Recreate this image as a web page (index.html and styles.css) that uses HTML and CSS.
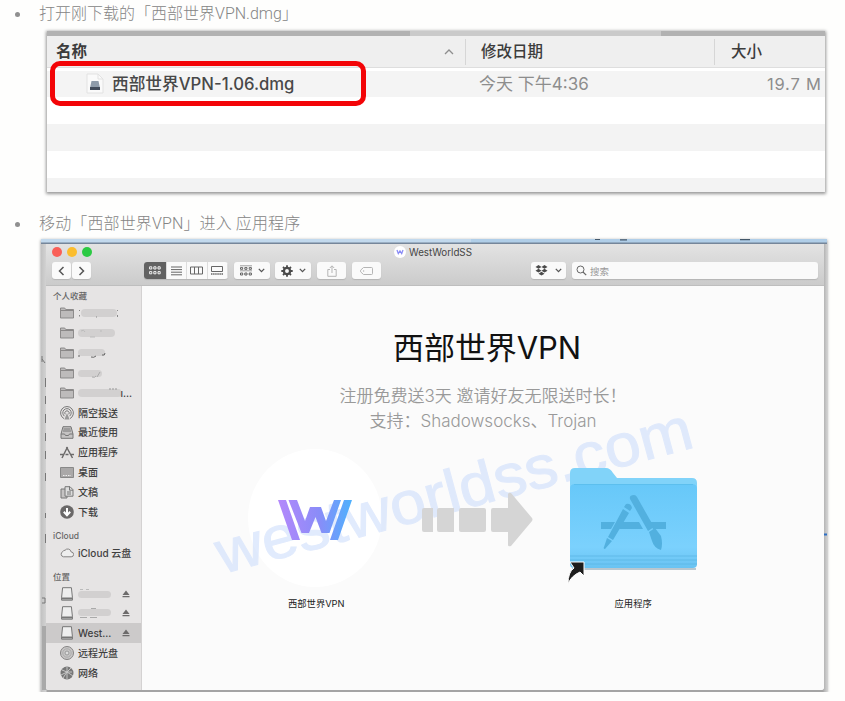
FILE: index.html
```html
<!DOCTYPE html>
<html lang="zh-CN">
<head>
<meta charset="utf-8">
<title>西部世界VPN</title>
<link rel="stylesheet" href="styles.css">
</head>
<body>
<svg class="defs" width="0" height="0">
  <defs>
    <linearGradient id="violet" x1="0" x2="1"><stop offset="0" stop-color="#b488fb"/><stop offset=".55" stop-color="#8a8cf8"/><stop offset="1" stop-color="#4eb1fd"/></linearGradient>
    <linearGradient id="sky" x1="0" y1="0" x2="0" y2="1"><stop offset="0" stop-color="#67c8f9"/><stop offset=".75" stop-color="#7bd1fd"/><stop offset="1" stop-color="#69c3f2"/></linearGradient>
    <symbol id="folder" viewBox="0 0 14 12"><path d="M.5 11V1h4.2l1 1.5h7.8V11z" fill="#bdbbbb" stroke="#858383" stroke-width=".9"/><path d="M.5 3.5h13" stroke="#8a8888"/></symbol>
    <symbol id="drive" viewBox="0 0 14 14"><path d="M2.600.7h8.800l1 9.500v3H1.600v-3z" fill="#eee" stroke="#777" stroke-width="1"/><path d="M1.600 11.500h10.800" stroke="#777" stroke-width="1.800"/></symbol>
    <symbol id="eject" viewBox="0 0 8 8"><path d="M4 .5 7.500 5h-7zM.5 6h7v1.300h-7z" fill="#6d6b6b"/></symbol>
    <symbol id="down" viewBox="0 0 7 5"><path d="m.8.9 2.700 2.700L6.200.9" fill="none" stroke="#555" stroke-width="1.300"/></symbol>
  </defs>
</svg>
<ul class="steps">
  <li>
    <p class="step-text">打开刚下载的「西部世界VPN.dmg」</p>
    <div class="list-shot">
      <div class="strip"><span></span></div>
      <div class="cols head">
        <b class="c-name">名称</b><svg class="sort" width="10" height="6" viewBox="0 0 10 6"><path d="m1 5 4-4 4 4" fill="none" stroke="#8e8e8e" stroke-width="1.3"/></svg>
        <b class="c-date">修改日期</b><b class="c-size">大小</b>
      </div>
      <div class="cols file">
        <svg width="20" height="22" viewBox="0 0 20 22"><path d="M2 1h11l5 5v14H2z" fill="#fafafa" stroke="#e2e2e2"/><path d="M13 1v5h5" fill="none" stroke="#e2e2e2"/><path d="m6.500 8h7l1.500 7v2H5v-2z" fill="#8e9ba9"/><path d="M5 14h10v3H5z" fill="#414b59"/></svg>
        <span class="f-name">西部世界VPN-1.06.dmg</span>
        <span class="f-date">今天 下午4:36</span><span class="f-size">19.7 M</span>
      </div>
      <div class="row"></div><div class="row odd"></div><div class="row"></div><div class="row odd last"></div>
      <div class="mark"></div>
    </div>
  </li>
  <li>
    <p class="step-text">移动「西部世界VPN」进入 应用程序</p>
    <div class="finder-shot">
      <svg class="blue" width="786" height="5" viewBox="0 0 786 5"><path d="M0 0h786v5H0z" fill="#c2d9ed"/><path d="M430 0h356v4H430z" fill="#b0cee8"/><path d="M0 4.200h786" stroke="#75869a" stroke-width="1.400"/><path d="M554 .5h5m20 .3h7m113-.2h10" stroke="#43576a" stroke-width="1.200"/></svg>
      <svg class="edge" width="786" height="449" viewBox="41 244 786 449"><path d="M45.500 378v9m0 9v8m0 10v9m0 10v8m0 10v8m0 14v8m0 32v5m0 16v9" stroke="#777"/><path d="M42 356v6m0-3 3 4M42 598h3v5h-3" fill="none" stroke="#777"/><path d="M42 626h4v64h-4z" fill="#a9a9a9"/><path d="M824 534.500h3" stroke="#2d6fc4" stroke-width="2"/></svg>
      <div class="behind">
        <div class="finder">
          <div class="toolbar">
            <div class="titlebar">
              <i class="dot red"></i><i class="dot yellow"></i><i class="dot green"></i>
              <span class="title"><svg width="12" height="12" viewBox="0 0 12 12"><circle cx="6" cy="6" r="6" fill="#fff"/><path d="m3 4 1.300 3.600L6 5l1.700 2.600L9 4" fill="none" stroke="#8b8df6" stroke-width="1.300"/></svg>WestWorldSS</span>
            </div>
            <div class="tools">
              <span class="btn nav"><svg width="7" height="10" viewBox="0 0 7 10"><path d="M5.500 1 1.500 5l4 4" fill="none" stroke="#555" stroke-width="1.500"/></svg></span>
              <span class="btn nav next"><svg width="7" height="10" viewBox="0 0 7 10"><path d="m1.500 1 4 4-4 4" fill="none" stroke="#555" stroke-width="1.500"/></svg></span>
              <span class="btn views">
                <span class="on"><svg width="12" height="9" viewBox="0 0 12 9"><path d="M.6.8h2.200v2.200H.6zM4.800.8H7V3H4.800zM9 .8h2.200V3H9zM.6 5.600h2.200v2.200H.6zM4.800 5.600H7v2.200H4.800zM9 5.600h2.200v2.200H9z" fill="none" stroke="#fff" stroke-width=".9"/></svg></span>
                <span><svg width="11" height="10" viewBox="0 0 11 10"><path d="M0 1h11M0 3.600h11M0 6.200h11M0 8.800h11" stroke="#666" stroke-width="1"/></svg></span>
                <span><svg width="13" height="9" viewBox="0 0 13 9"><path d="M.5 1h12v7H.5zM4.500 1v7M8.500 1v7" fill="none" stroke="#666"/></svg></span>
                <span><svg width="12" height="9" viewBox="0 0 12 9"><path d="M.5 5.500v-5h11v5z" fill="none" stroke="#666"/><path d="M0 8h12" stroke="#666" stroke-width="1.500" stroke-dasharray="1.500 .6"/></svg></span>
              </span>
              <span class="btn arrange"><svg width="12" height="11" viewBox="0 0 12 11"><path d="M0 .8h12M0 5.800h12" stroke="#888" stroke-width=".8"/><path d="M.5 2.600h2.200v1.700H.5zM4.800 2.600H7v1.700H4.800zM9.200 2.600h2.200v1.700H9.200zM.5 8h2.200v2H.5zM4.800 8H7v2H4.800zM9.200 8h2.200v2H9.200z" fill="none" stroke="#555" stroke-width=".9"/></svg><svg width="7" height="5"><use href="#down"/></svg></span>
              <span class="btn gear"><svg width="12" height="12" viewBox="0 0 12 12"><circle cx="6" cy="6" r="3.100" fill="none" stroke="#4a4a4a" stroke-width="2.300"/><path d="M6 .3v2M6 9.700v2M.3 6h2M9.700 6h2M2 2l1.400 1.400M8.600 8.600 10 10M2 10l1.400-1.400M8.600 3.400 10 2" stroke="#4a4a4a" stroke-width="1.800"/></svg><svg width="7" height="5"><use href="#down"/></svg></span>
              <span class="btn share"><svg width="10" height="12" viewBox="0 0 10 12"><path d="M3 4.500H.8v6.800h8.400V4.500H7M5 8V1M2.800 3 5 .8 7.200 3" fill="none" stroke="#b5b5b5"/></svg></span>
              <span class="btn tag"><svg width="13" height="8" viewBox="0 0 13 8"><path d="M3.500.5h8q1 0 1 1v5q0 1-1 1h-8L.6 4.800v-1.600z" fill="none" stroke="#b5b5b5"/><circle cx="3.600" cy="4" r=".7" fill="#b5b5b5"/></svg></span>
              <span class="btn box"><svg width="13" height="11" viewBox="0 0 13 11"><path d="M3.500 0 6.500 1.900 3.500 3.800.5 1.900zM9.500 0l3 1.900-3 1.900-3-1.900zM3.500 3.800l3 1.900-3 1.900-3-1.900zM9.500 3.800l3 1.900-3 1.900-3-1.900zM6.500 6.800l3 1.900-3 1.900-3-1.900z" fill="#4a4a4a"/></svg><svg width="7" height="5"><use href="#down"/></svg></span>
              <span class="btn search"><svg width="11" height="11" viewBox="0 0 11 11"><circle cx="4.500" cy="4.500" r="3.500" fill="none" stroke="#666"/><path d="m7 7 3.200 3.200" stroke="#666" stroke-width="1.200"/></svg>搜索</span>
            </div>
          </div>
          <div class="body">
            <div class="side">
              <h4>个人收藏</h4>
              <div class="item"><svg width="14" height="12"><use href="#folder"/></svg><svg width="42" height="12" viewBox="0 0 42 12"><rect x="3" y="2" width="36" height="8" rx="4" fill="#d2d0d0"/><path d="M1.500 3v1m0 4v1.500m17 0v1m21-7.500v1m0 4v2" stroke="#888"/></svg></div>
              <div class="item"><svg width="14" height="12"><use href="#folder"/></svg><svg width="42" height="12" viewBox="0 0 42 12"><rect y="2" width="37" height="8" rx="4" fill="#d2d0d0"/><path d="M3 4q3-2 4 1m5 5h5m6-7v2" stroke="#bbb" fill="none"/></svg></div>
              <div class="item"><svg width="14" height="12"><use href="#folder"/></svg><svg width="42" height="12" viewBox="0 0 42 12"><rect y="2" width="27" height="7" rx="3.500" fill="#d2d0d0"/><path d="M1 8v2m12 0q3 1 5-1m6-1q3 1 3-2" stroke="#666" fill="none"/></svg></div>
              <div class="item"><svg width="14" height="12"><use href="#folder"/></svg><svg width="42" height="12" viewBox="0 0 42 12"><rect y="3" width="24" height="7" rx="3.500" fill="#d2d0d0"/><path d="M14 10q3 1 4-1m4-4-3 5" stroke="#aaa" fill="none"/></svg></div>
              <div class="item"><svg width="14" height="12"><use href="#folder"/></svg><svg width="43" height="12" viewBox="0 0 43 12"><rect y="2" width="44" height="8" rx="4" fill="#d2d0d0"/><path d="M31 2h9" stroke="#999" stroke-dasharray="2 1"/></svg><span class="dots">ı...</span></div>
              <div class="item"><svg width="14" height="14" viewBox="0 0 14 14"><g fill="none" stroke="#777"><path d="M4 12.600a6.400 6.400 0 1 1 6 0M4.500 10.200a4.200 4.200 0 1 1 5 0M5.200 8.300a2.200 2.200 0 1 1 3.600 0"/></g><path d="m7 7 2.600 6.500H4.400z" fill="#999"/></svg>隔空投送</div>
              <div class="item"><svg width="14" height="13" viewBox="0 0 14 13"><path d="M3 .7h8l2 7.300v4.300H1V8z" fill="#c5c3c3" stroke="#777"/><path d="M3.500 3h7M3 5h8M1 8h3.500l1 1.500h3L9.500 8H13" fill="none" stroke="#777"/></svg>最近使用</div>
              <div class="item"><svg width="14" height="13" viewBox="0 0 14 13"><path d="M6.500 1 12.500 12M7.500 1 2 12M0 8.500h4m1.500 0h3m2.500 0h3" fill="none" stroke="#6d6b6b" stroke-width="1.500"/></svg>应用程序</div>
              <div class="item"><svg width="14" height="11" viewBox="0 0 14 11"><path d="M.5.5h13v10H.5z" fill="#aaa8a8" stroke="#888"/><path d="M3 8.500h8" stroke="#eee" stroke-dasharray="1.500 1"/></svg>桌面</div>
              <div class="item"><svg width="14" height="13" viewBox="0 0 14 13"><path d="M1 3h6v9H1z" fill="#c5c3c3" stroke="#777"/><path d="M5 .7h5l3 3v6.500H5z" fill="#ddd" stroke="#777"/><path d="M9.500.7v3.500H13M7 6h4M7 8h4" fill="none" stroke="#777"/></svg>文稿</div>
              <div class="item"><svg width="14" height="14" viewBox="0 0 14 14"><circle cx="7" cy="7" r="6.800" fill="#6a6868"/><path d="M7 3v6M3.800 6.800 7 10.200l3.200-3.400" fill="none" stroke="#fff" stroke-width="2"/></svg>下载</div>
              <h4 class="cloud">iCloud</h4>
              <div class="item"><svg width="14" height="11" viewBox="0 0 14 11"><path d="M3.500 9.800a2.700 2.700 0 0 1-.6-5.200Q3.500 3 5 3.300A3.500 3.500 0 0 1 11.200 5a2.400 2.400 0 0 1 0 4.800z" fill="#eee" stroke="#858383"/></svg>iCloud 云盘</div>
              <h4 class="place">位置</h4>
              <div class="item"><svg width="14" height="14"><use href="#drive"/></svg><svg width="36" height="12" viewBox="0 0 36 12"><rect x="0" y="3" width="33" height="7" rx="3.500" fill="#d2d0d0"/><path d="M2 1.500h3m3 0h3" stroke="#bbb"/></svg><svg class="eject" width="8" height="8"><use href="#eject"/></svg></div>
              <div class="item"><svg width="14" height="14"><use href="#drive"/></svg><svg width="36" height="12" viewBox="0 0 36 12"><rect x="0" y="2" width="33" height="7" rx="3.500" fill="#d2d0d0"/><path d="M2 10.500h7m3 0h7M13 1.500h5" stroke="#aaa"/></svg><svg class="eject" width="8" height="8"><use href="#eject"/></svg></div>
              <div class="item sel"><svg width="14" height="14"><use href="#drive"/></svg>West...<svg class="eject" width="8" height="8"><use href="#eject"/></svg></div>
              <div class="item"><svg width="14" height="14" viewBox="0 0 14 14"><circle cx="7" cy="7" r="6.500" fill="#c8c6c6" stroke="#858383"/><circle cx="7" cy="7" r="4.200" fill="none" stroke="#aaa"/><circle cx="7" cy="7" r="2" fill="#ddd" stroke="#999"/></svg>远程光盘</div>
              <div class="item"><svg width="14" height="14" viewBox="0 0 14 14"><circle cx="7" cy="7" r="6.500" fill="#777"/><path d="M2 4l5 2 4-4M1 9l6-3 6 4M7 1v12M3 12l4-6 5 0" fill="none" stroke="#ccc" stroke-width=".9"/></svg>网络</div>
            </div>
            <div class="content">
              <div class="disc"></div>
              <svg class="watermark" width="682" height="404" viewBox="142 286 682 404"><text transform="translate(222 574) rotate(-15)" textLength="491" lengthAdjust="spacingAndGlyphs" font-size="60">westworldss.com</text></svg>
              <h1>西部世界VPN</h1>
              <p class="promo">注册免费送3天 邀请好友无限送时长！</p>
              <p class="support">支持：Shadowsocks、Trojan</p>
              <div class="install">
                <div class="app"><svg width="74" height="40" viewBox="0 0 74 40"><path d="M0 0h8l14 40h-8zM10.500 0H19l8 21 5-14h11l5 14 8-21h7L51.500 33h-8L37.500 17 31 33h-7.500zM66 0h8L60 40h-8z" fill="url(#violet)"/></svg></div>
                <svg class="arrow" width="112" height="56" viewBox="0 0 112 56"><path d="M2 16h9v24H2q-2 0-2-2V18q0-2 2-2zM17 16h15v24H17q-2 0-2-2V18q0-2 2-2zM39 16h23q2 0 2 2v20q0 2-2 2H39q-2 0-2-2V18q0-2 2-2zM71 16h15V2q1-2 3-1l21 25q1 1.500 0 3L89 54q-3 1-3-1V40H71q-2 0-2-2V18q0-2 2-2z" fill="#d5d5d5"/></svg>
                <svg class="apps" width="136" height="118" viewBox="564 467 136 118">
                  <path d="M570 473q0-5 5-5h31q4 0 7 5l4 5h75q5 0 5 5v80H570z" fill="#81d3f9"/>
                  <path d="M572 569h124" stroke="#b9c7cf" stroke-width="2"/>
                  <path d="M570 489q0-5 5-5h117q5 0 5 5v75q0 4-4 4H574q-4 0-4-4z" fill="url(#sky)"/>
                  <path d="M574 484.500h119" stroke="#5cbfee"/><path d="M570 556h127M570 560h127M570 564h127" stroke="#5ab6e5" stroke-width=".8"/>
                  <g fill="#52b0df"><path d="M601 522h14l-4 7h-10zM623 522h16l4 7h-24zM649 522h17v7h-13z"/><path d="m624 507 2-3q5-1 6 4l-2 3zM623 509l6 4-16 27-5-3zM607 538l5 3-7 8q-2 0-1-2zM630 499q-1-4 4-4 2 0 3 2l17 30-6 4zM649 532l6-4 6 8q2 8 0 14-7-2-9-9z"/></g>
                  <path d="M570 562h14v14l-4-4q-9 4-12 12 0-12 6-16z" fill="#1d1d1d" stroke="#fff" stroke-width="1"/>
                </svg>
              </div>
              <div class="labels"><span>西部世界VPN</span><span class="apps-label">应用程序</span></div>
            </div>
          </div>
        </div>
      </div>
    </div>
  </li>
</ul>
</body>
</html>
```
FILE: styles.css
```css
* { box-sizing: border-box; }
body { margin: 0; background: #fefefd; font-family: Inter, "Noto Sans CJK SC", sans-serif; color: #333; overflow: hidden; }
svg { display: block; flex: none; }
.defs { position: absolute; }
p, h1, h4 { margin: 0; font-weight: 400; }
.steps { list-style: none; margin: 0; padding: 0 0 0 39px; }
.steps li { position: relative; }
.steps li::before { content: ""; position: absolute; left: -24px; top: 12px; width: 5px; height: 5px; border-radius: 50%; background: #909090; }
.step-text { height: 31px; font: 300 16px/27px Roboto, "Noto Sans CJK SC", sans-serif; color: #858585; white-space: nowrap; }
.steps li + li .step-text { height: 29px; letter-spacing: .13px; }
.steps li + li { margin-top: 18px; }

.list-shot { position: relative; margin-left: 8px; width: 778px; height: 161px; background: #fff; box-shadow: 0 1px 3px 1px #999; }
.strip { height: 5px; background: #b2b2b2; padding-left: 363px; }
.strip span { display: block; width: 251px; height: 5px; background: #cacaca; }
.cols { display: flex; align-items: center; white-space: nowrap; }
.head { height: 32px; background: #efefef; border-bottom: 1px solid #dedede; font-size: 15.500px; }
.head b { font-weight: 500; color: #3c3c3c; line-height: 26px; }
.head .c-name { width: 397px; padding-left: 9px; font-weight: 600; }
.sort { width: 10px; margin-right: 11px; }
.head .c-date { width: 249px; padding-left: 15px; border-left: 1px solid #d6d6d6; }
.head .c-size { padding-left: 16px; border-left: 1px solid #d6d6d6; }
.file { height: 29px; padding-left: 38px; background: #f4f4f4; border-top: 3px solid #fff; font-size: 17px; line-height: 26px; }
.f-name { width: 367px; padding-left: 7px; font-weight: 500; font-size: 16.700px; color: #484848; }
.f-date { width: 295px; padding-left: 7px; color: #8d8d8d; }
.f-size { color: #8d8d8d; font-size: 16.500px; letter-spacing: .8px; }
.row { height: 27px; background: #fff; }
.row.odd { background: #f3f3f3; }
.row.last { height: 14px; }
.mark { position: absolute; left: 3px; top: 30px; width: 316px; height: 45px; border: 5px solid #f30407; border-radius: 10px; }

.finder-shot { position: relative; margin-left: 2px; width: 786px; height: 453px; box-shadow: 0 1px 3px #888; }
.edge { position: absolute; left: 0; top: 5px; }
.behind { height: 448px; padding: 0 4px 2px 5px; background: linear-gradient(90deg, #c2c2c2 0, #d2d2d2 5px, #a5a5a5 6px, #a5a5a5 782px, #b4b4b4 783px, #cfcfcf 786px); }
.finder { height: 446px; width: 778px; background: #fbfbfb; border-radius: 0 0 3px 3px; overflow: hidden; }
.toolbar { height: 42px; background: linear-gradient(#e3e3e3, #cbcbcb); border-bottom: 1px solid #bebebe; }
.titlebar { height: 16px; display: flex; align-items: center; padding-left: 5.600px; gap: 5.300px; }
.dot { width: 10px; height: 10px; border-radius: 50%; }
.red { background: #f95f57; } .yellow { background: #fbbd2e; } .green { background: #2bca43; }
.title { display: flex; align-items: center; gap: 3px; margin-left: 296.500px; font-size: 9.800px; color: #454545; }
.tools { display: flex; align-items: center; height: 21px; padding-left: 6px; }
.btn { height: 17px; background: #fafafa; border-radius: 3px; box-shadow: 0 1px 1px #b5b5b5; display: flex; align-items: center; justify-content: center; }
.nav { width: 19px; } .next { margin-left: 1px; }
.views { margin-left: 53px; width: 84px; overflow: hidden; }
.views > span { width: 20.500px; height: 17px; display: flex; align-items: center; justify-content: center; border-right: 1px solid #ddd; }
.views > .on { width: 22.500px; background: #626262; }
.arrange { margin-left: 6px; width: 36px; gap: 6px; }
.gear { margin-left: 5px; width: 36px; gap: 6px; }
.share { margin-left: 6px; width: 29px; }
.tag { margin-left: 6px; width: 29px; }
.box { margin-left: 150px; width: 35px; gap: 7px; }
.search { margin-left: 6px; width: 246px; justify-content: flex-start; padding-left: 4px; gap: 3px; font-size: 9.500px; color: #999; }
.body { display: flex; height: 404px; }
.side { width: 96px; background: #e6e4e4; border-right: 1px solid #d4d2d2; }
.side h4 { height: 17.500px; padding: 5px 0 0 7px; font-size: 8.500px; line-height: 11px; font-weight: 500; color: #666; }
.side .cloud, .side .place { height: 21px; padding-top: 9px; }
.item { height: 19.850px; display: flex; align-items: center; gap: 4.500px; padding-left: 13.500px; font-size: 10px; line-height: 14px; font-weight: 500; color: #3f3f3f; white-space: nowrap; }
.item.sel { background: #cccaca; }
.item .dots { margin-left: -5px; }
.eject { margin-left: auto; margin-right: 11px; }
.content { position: relative; width: 682px; display: flex; flex-direction: column; align-items: center; background: #fbfbfb; }
.content > * { position: relative; }
.content .watermark { position: absolute; left: 0; top: 0; }
.watermark text { font-family: "Liberation Sans", sans-serif; fill: #cedefc; opacity: .6; stroke: #cedefc; stroke-width: 1; }
.content .disc { position: absolute; left: 106px; top: 163px; width: 134px; height: 138px; border-radius: 50%; background: #fff; }
h1 { margin: 38px 0 0 8px; font-size: 31px; line-height: 48px; font-weight: 400; color: #111; white-space: nowrap; letter-spacing: -.1px; }
.promo, .support { font-size: 17px; line-height: 25px; font-weight: 350; color: #999; white-space: nowrap; }
.promo { margin-top: 12px; }
.install { display: flex; width: 682px; height: 163px; padding: 45px 0 0 136px; }
.app { width: 74px; padding-top: 21px; }
.arrow { margin: 13px 0 0 70px; }
.apps { margin: -12px 0 0 30px; }
.labels { width: 682px; display: flex; padding-left: 146px; font-size: 9.300px; line-height: 14px; color: #222; }
.labels .apps-label { margin-left: 270px; }
```
